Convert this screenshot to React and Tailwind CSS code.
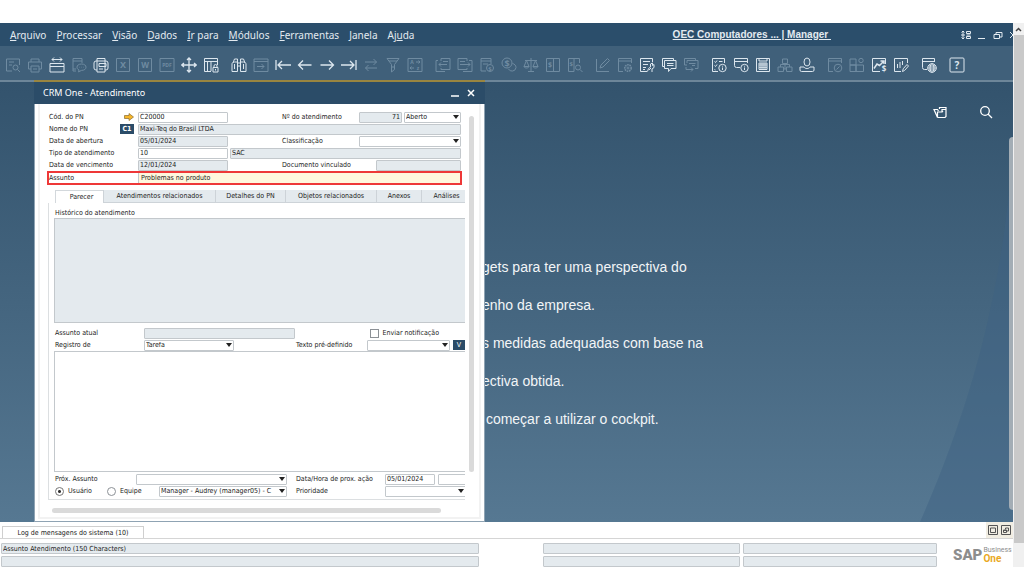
import React from 'react';
import clsx from 'clsx';

const FORM_FONT = "font-['DejaVu_Sans_Condensed','DejaVu_Sans',sans-serif]";

const MENUS = [
  ['', 'A', 'rquivo'],
  ['', 'P', 'rocessar'],
  ['', 'V', 'isão'],
  ['', 'D', 'ados'],
  ['', 'I', 'r para'],
  ['', 'M', 'ódulos'],
  ['', 'F', 'erramentas'],
  ['', 'J', 'anela'],
  ['Aj', 'u', 'da'],
];

const letter = (char, size = 9, x = 8, y = 11) => (
  <text x={x} y={y} fontSize={size} fontWeight="700" textAnchor="middle" fill="currentColor" stroke="none">
    {char}
  </text>
);

const coin = (cx, cy, r = 3) => (
  <>
    <circle cx={cx} cy={cy} r={r} />
    {letter('$', r * 2 - 1, cx, cy + r - 1)}
  </>
);

const info = (
  <>
    <circle cx="11.5" cy="11" r="3.7" />
    <path d="M11.5 10.5v2.5M11.5 8.8v.8" />
  </>
);

// Toolbar groups: [label, enabled, drawing]
const TOOLBAR = [
  [
    ['Visualizar', false, <><path d="M7 14H1.5V2h13v6M4 5h5M4 8h3" /><circle cx="10.5" cy="10.5" r="2.5" /><path d="m12.5 12.5 2.5 2.5" /></>],
    ['Imprimir', false, <><path d="M4 5V2h8v3M4 12H1.5V5h13v7H12" /><path d="M4 9h8v6H4zM6 12h4" /></>],
    ['Enviar', true, <><path d="M1 6.500h14v8.500H1zM1 9.500h14" /><path d="M3 2.500h10M5 .5 3 2.500l2 2M11 .5l2 2-2 2" /></>],
    ['Enviar SMS', false, <><path d="M5 14H2V1.500h9V6M2 4h9M2 12h3" /><path d="M10.500 7c3 0 4.500 1.500 4.500 3.200s-1.500 3.200-4.500 3.200l-3 1.500.5-2C6.500 12.300 6 11.300 6 10.200 6 8.500 7.500 7 10.500 7zM8.500 10.200h.5M10.300 10.200h.5M12 10.200h.5" /></>],
    ['Fax', true, <><path d="M4 4H3a2 2 0 0 0-2 2v5a2 2 0 0 0 2 2h1M12 4h1a2 2 0 0 1 2 2v5a2 2 0 0 1-2 2h-1M4 1.500h8V15H4zM4 4h8" /><path d="M6 6.500h7v3H6zM6 12h4" /></>],
    ['Exportar para Excel', false, <><path d="M1.500 1.500h13v13h-13z" />{letter('X')}</>],
    ['Exportar para Word', false, <><path d="M1.500 1.500h13v13h-13z" />{letter('W', 8)}</>],
    ['Exportar para PDF', false, <><path d="M1 1.500h14v13H1z" />{letter('PDF', 5, 8, 10)}</>],
    ['Mover', true, <><path strokeWidth="1.300" d="M8 1v14M.8 8h14.400M6 3l2-2 2 2M6 13l2 2 2-2M3 6 .8 8 3 10M13 6l2.200 2L13 10" /></>],
    ['Bloquear tela', true, <><path d="M8 14.500H1.500v-13h13V8M1.500 4.500h13M4.500 4.500v10M8 4.500V14" /><path d="M10 10.500h5V15h-5zM11 10.500V9a1.500 1.500 0 0 1 3 0v1.500M12.500 12v1.500" /></>],
  ],
  [
    ['Procurar', true, <><path d="M2 6 3.500 2h3v3M14 6l-1.500-4h-3v3M1 7c0-1 1-2 2.500-2H6.500v9.500H1zM15 7c0-1-1-2-2.500-2H9.500v9.500H15zM6.500 6h3M6.500 9h3M3.500 7v5M12.500 7v5" /></>],
    ['Incluir', false, <><path d="M1 2h14v12.500H1zM1 4.500h14M4 9.500h7M8.500 7l2.500 2.500L8.500 12" /></>],
    ['Primeiro registro', true, <path strokeWidth="1.300" d="M1 3v10M3 8h13M7 4 3 8l4 4" />],
    ['Registro anterior', true, <path strokeWidth="1.300" d="M1.500 8h13M6 3.500 1.500 8 6 12.500" />],
    ['Próximo registro', true, <path strokeWidth="1.300" d="M1.500 8h13M10 3.500 14.500 8 10 12.500" />],
    ['Último registro', true, <path strokeWidth="1.300" d="M15 3v10M0 8h13M9 4l4 4-4 4" />],
    ['Atualizar', false, <path d="M2 5h11.500M10.500 2l3 3-3 3M14 11H2.500M5.500 8l-3 3 3 3" />],
    ['Filtro', false, <path d="M2 1.500h12l-4.500 6v5L6.500 15V7.500zM4 4h8M6.500 10h3" />],
    ['Ordenar', false, <><path d="M1 1.500h14v13H1zM9 5h4M11.500 3.500 13 5l-1.500 1.500M7 11H3M4.500 9.500 3 11l1.500 1.500" />{letter('A', 5, 5, 7)}{letter('z', 5, 11, 13)}</>],
  ],
  [
    ['Documento base', false, <path d="M6 4V1.500h9v11H6V11M3 3.500H1v11h9M8 4.500h5M12 7.500H4M6 5.500l-2 2 2 2" />],
    ['Documento destino', false, <path d="M10 4V1.500H1v11h9V11M12 3.500h3v11H6M3 4.500h5M3 7.500h10M11 5.500l2 2-2 2" />],
    ['Lucro bruto', false, <><path d="M7 14H2V1.500h10V7M2 4h10M4 7h5" />{coin(11, 11, 3.5)}</>],
    ['Meios de pagamento', false, <>{coin(6, 6, 5)}<path d="M11.500 6.500c2 .5 3.500 2 3.500 4A4 4 0 0 1 7.500 12" /></>],
    ['Volume e peso', false, <path d="M8 1v13.500M5 14.500h6M2 3.500h12M3.500 3.500 1 9.500h5zM12.500 3.500 10 9.500h5zM1 9.500c.5 2 4.500 2 5 0M10 9.500c.5 2 4.500 2 5 0" />],
    ['Diário', false, <><path d="M1.500 1.500h13v13h-13zM8.500 1.500v13" />{letter('$', 7, 5, 10)}</>],
    ['Pesquisa de conta', false, <><path d="M7 14.500H1.500v-13h11V6M7 1.500v13" />{letter('$', 6, 4.300, 9)}<circle cx="11" cy="10.500" r="2.500" /><path d="m13 12.500 2.500 2.500" /></>],
  ],
  [
    ['Editar modelo', false, <path d="M1.500 2v12.500H14M5 11l1-3 6.500-6.500 2 2L8 10z" />],
    ['Configurações', false, <><path d="M6 14.500H1.500v-13h13V6M1.500 4h13" /><circle cx="11" cy="11" r="3.200" strokeDasharray="1.600 .7" strokeWidth="1.600" /><circle cx="11" cy="11" r="1" /></>],
    ['Personalizar formulário', true, <path d="M8 14.500H1.500v-13h12V5M4 4.500h7M4 7.500h5M4 10.500h3M4 12.500h2M8.500 14.500l1-3 2-1.500v-3l2-1v2.500l1.500-1v3L13 12v3M10 13l2-2" />],
    ['Mensagens', true, <path d="M3.500 9.500H1.500V1.500h11v2M3.500 3.500h11.500v8H10l-2.500 3v-3h-4zM6 6.500h6.500M6 8.500h6.500" />],
    ['Responder', false, <path d="M4 8H1.500V1.500h11v2M4 6V3.500h11v8h-3M6 6.500h6.500M12 8.500H9M3 12.500h7M8 10.500l2 2-2 2M3 10v2.500" />],
  ],
  [
    ['Lista de alertas', true, <><path d="M7 14.500H1.500v-13h12V6M3.500 4.500l1 1 1.500-2M3.500 8.500l1 1 1.500-2M8 4.500h3.500M3.500 12.500l1 .500" />{info}</>],
    ['Resumo', true, <><path d="M7 10.500H3.500a2 2 0 0 1-2-2v-7h13V6M1.500 4.500h13" />{info}</>],
    ['Calendário', true, <path d="M1.500 1.500h13v13h-13zM4 4h8M4 6h8v6.500H4zM6 6v6.500M8 6v6.500M10 6v6.500M4 8h8M4 10.300h8M4 1v3M12 1v3" />],
    ['Estrutura', false, <path d="M5.500 2h5v4.500h-5zM1 10h5.500v4.500H1zM9.500 10H15v4.500H9.500zM8 6.500V12M3.500 10V7.500h9V10M6.500 12h3" />],
    ['Usuário', true, <><ellipse cx="8" cy="5" rx="3" ry="4" /><path d="M1 10h4c1 2 5 2 6 0h4v3q0 1.500-1.500 1.500h-11Q1 14.500 1 13z" /></>],
  ],
  [
    ['Histórico', false, <><path d="M6 14.500H1.500v-13h13V6M1.500 4h13" /><circle cx="11" cy="11" r="3.800" /><path d="m9.500 12.500 3-3" /></>],
    ['Widgets', false, <><path d="M1 2h6v6H1zM1 8h6v6.500H1zM7 8h7.500v6.500H7z" /><circle cx="12" cy="3.500" r="2.200" /></>],
    ['Painel financeiro', true, <><path d="M9 14.500H1.500v-13h13V7" /><path strokeWidth="1.500" d="M3 11.500 6 7l2.500 1.500 4-4M9.500 4H13v3" />{letter('$', 8, 13, 15)}</>],
    ['Painel de relatórios', true, <path d="M8 14.500H1.500v-13h13V6M4.500 7v4M7 5v6M9.500 4v4M9.500 14.500l.7-2.700L14 7.500l1.500 1.500-4 4.500z" />],
  ],
  [
    ['Navegador', true, <><path d="M6 12.500H3.500a2 2 0 0 1-2-2v-9h12V5M1.500 4.500h12" /><circle cx="11" cy="11" r="4.300" /><ellipse cx="11" cy="11" rx="2" ry="4.300" /><path d="M6.700 11h8.600M7.500 9h7M7.500 13h7" /></>],
  ],
  [['Ajuda', true, <><rect x="1" y="1" width="14" height="14" rx="1" />{letter('?', 10, 8, 11.5)}</>]],
];

function Toolbar() {
  return (
    <div className="flex h-[34px] items-center gap-3 overflow-hidden bg-[#40607a] pl-[5px] pt-[3px]">
      {TOOLBAR.map((group, i) => (
        <div key={i} className="flex shrink-0 gap-1.5">
          {group.map(([label, enabled, drawing]) => (
            <button
              key={label}
              aria-label={label}
              className={clsx('size-4', enabled ? 'text-[#dce6ee]' : 'text-[#6f8ba1]')}
            >
              <svg viewBox="0 0 16 16" className="size-4" fill="none" stroke="currentColor" strokeWidth="1">
                {drawing}
              </svg>
            </button>
          ))}
        </div>
      ))}
    </div>
  );
}

function MenuBar() {
  return (
    <header className="flex h-[23px] items-center bg-[#2b4e6b] text-[#e3eaf0]">
      <nav className="flex flex-1 gap-2.5 pl-2.5 font-['Noto_Sans',sans-serif] text-[10px] leading-4">
        {MENUS.map(([before, key, after]) => (
          <button key={key + after} className="whitespace-nowrap">
            {before}
            <span className="underline">{key}</span>
            {after}
          </button>
        ))}
      </nav>
      <a
        href="#empresa"
        className="mr-[130px] whitespace-pre font-['Liberation_Sans',sans-serif] text-[10px] font-bold leading-4 underline"
      >
        {'OEC Computadores ... | Manager '}
      </a>
      <div className="flex gap-1.5">
        <button aria-label="Layout">
          <svg viewBox="0 0 10 10" className="size-2.5" fill="none" stroke="currentColor">
            <path d="M2 1v8M.5 2.500 2 1l1.500 1.500M.5 7.500 2 9l1.500-1.500M0 5h4M5.500 1.500h4v2h-4zM5.500 6.500h4v2h-4zM5.500 5h4" />
          </svg>
        </button>
        <button aria-label="Minimizar">
          <svg viewBox="0 0 10 10" className="size-2.5" stroke="currentColor"><path d="M1 8.500h7" /></svg>
        </button>
        <button aria-label="Restaurar">
          <svg viewBox="0 0 10 10" className="size-2.5" fill="none" stroke="currentColor">
            <path d="M1 4.500h5.500v4H1zM3 4.500v-2h6v4.500H6.500" />
          </svg>
        </button>
        <button aria-label="Fechar" className="w-1 overflow-hidden">
          <svg viewBox="0 0 10 10" className="size-2.5" stroke="currentColor"><path d="m1 2 6 6M7 2 1 8" /></svg>
        </button>
      </div>
    </header>
  );
}

function Field({ className, value = '', readOnly, ...rest }) {
  return (
    <input
      type="text"
      defaultValue={value}
      readOnly={readOnly}
      className={clsx(
        'h-[11px] min-w-0 shrink-0 rounded-[1px] border border-[#c3c8cc] px-px leading-none outline-none',
        readOnly ? 'bg-[#e4eaee]' : 'bg-white',
        className
      )}
      {...rest}
    />
  );
}

function Select({ className, value = '', ...rest }) {
  return (
    <div className={clsx('grid h-[11px] shrink-0 items-center', className)}>
      <select
        defaultValue={value}
        className="col-start-1 row-start-1 h-[11px] w-full appearance-none rounded-[1px] border border-[#c3c8cc] bg-white px-px leading-none outline-none"
        {...rest}
      >
        <option value={value}>{value}</option>
      </select>
      <svg viewBox="0 0 6 4" className="pointer-events-none col-start-1 row-start-1 mr-0.5 h-1 w-1.5 justify-self-end">
        <path d="M0 0h6L3 4z" fill="#222" />
      </svg>
    </div>
  );
}

function Label({ className, ...rest }) {
  return <label className={clsx('shrink-0 whitespace-nowrap leading-3', className)} {...rest} />;
}

function Header() {
  return (
    <div className="w-[414px] pl-0.5">
      <div className="flex h-3 items-center">
        <Label htmlFor="cod" className="w-[75px]">Cód. do PN</Label>
        <button aria-label="Abrir cadastro" className="mr-1">
          <svg viewBox="0 0 10 8" className="h-2 w-2.5">
            <path d="M.5 2.500h4.500V.5L9.500 4 5 7.500v-2H.5z" fill="#f5b62c" stroke="#8a6a2a" strokeWidth=".7" />
          </svg>
        </button>
        <Field id="cod" value="C20000" className="w-[90px]" />
        <Label htmlFor="num" className="ml-auto w-[77px]">Nº do atendimento</Label>
        <Field id="num" value="71" readOnly className="mr-0.5 w-[43px] text-right" />
        <Select aria-label="Status" value="Aberto" className="w-[57px]" />
      </div>
      <div className="flex h-3 items-center">
        <Label htmlFor="nome" className="w-[71px]">Nome do PN</Label>
        <button className="mr-1 h-2.5 w-3.5 bg-[#2b4c68] font-bold leading-[10px] text-white">C1</button>
        <Field id="nome" value="Maxi-Teq do Brasil LTDA" readOnly className="flex-1" />
      </div>
      <div className="flex h-3 items-center">
        <Label htmlFor="abertura" className="w-[89px]">Data de abertura</Label>
        <Field id="abertura" value="05/01/2024" readOnly className="w-[90px]" />
        <Label htmlFor="classe" className="ml-auto w-[77px]">Classificação</Label>
        <Select id="classe" className="w-[102px]" />
      </div>
      <div className="flex h-3 items-center">
        <Label htmlFor="tipo" className="w-[89px]">Tipo de atendimento</Label>
        <Field id="tipo" value="10" className="mr-0.5 w-[90px]" />
        <Field aria-label="Descrição do tipo" value="SAC" readOnly className="flex-1" />
      </div>
      <div className="flex h-3 items-center">
        <Label htmlFor="venc" className="w-[89px]">Data de vencimento</Label>
        <Field id="venc" value="12/01/2024" readOnly className="w-[90px]" />
        <Label htmlFor="doc" className="ml-auto w-[94px]">Documento vinculado</Label>
        <Field id="doc" readOnly className="w-[85px]" />
      </div>
    </div>
  );
}

const TABS = ['Parecer', 'Atendimentos relacionados', 'Detalhes do PN', 'Objetos relacionados', 'Anexos', 'Análises'];
const TAB_WIDTHS = ['w-[48px]', 'w-[112px]', 'w-[70px]', 'w-[91px]', 'w-[45px]', 'w-[50px]'];

function TicketPanel() {
  return (
    <div className="ml-px overflow-hidden border-b border-l border-[#dcdfe1] pb-0.5 pl-[5px] pt-1">
      <Label htmlFor="historico" className="block h-[11px] pl-px">Histórico do atendimento</Label>
      <textarea
        id="historico"
        readOnly
        className="block h-[105px] w-full resize-none border border-r-0 border-[#c3c8cc] bg-[#e4eaee] outline-none"
      />
      <div className="mt-1 flex h-3 items-center pl-px">
        <Label htmlFor="atual" className="w-[89px]">Assunto atual</Label>
        <Field id="atual" readOnly className="w-[151px]" />
        <input
          id="notificar"
          type="checkbox"
          className="ml-auto mr-1 size-[9px] appearance-none border border-[#8c9196] bg-white"
        />
        <Label htmlFor="notificar" className="mr-[26px]">Enviar notificação</Label>
      </div>
      <div className="flex h-3 items-center pl-px">
        <Label htmlFor="registro" className="w-[89px]">Registro de</Label>
        <Select id="registro" value="Tarefa" className="w-[90px]" />
        <Label htmlFor="texto" className="ml-auto w-[71px]">Texto pré-definido</Label>
        <Select id="texto" className="w-[83px]" />
        <button className="ml-[3px] h-2.5 w-3 bg-[#2b4c68] leading-[10px] text-white">V</button>
      </div>
      <textarea
        aria-label="Parecer"
        className="block h-[121px] w-full resize-none border border-r-0 border-[#c3c8cc] bg-white outline-none"
      />
      <div className="mt-px flex h-3 items-center pl-px">
        <Label htmlFor="prox" className="w-[81px]">Próx. Assunto</Label>
        <Select id="prox" className="w-[151px]" />
        <Label htmlFor="data" className="ml-[9px] w-[89px]">Data/Hora de prox. ação</Label>
        <Field id="data" value="05/01/2024" className="mr-[3px] w-[50px]" />
        <Field aria-label="Hora" className="w-8" />
      </div>
      <div className="flex h-3 items-center pl-px">
        <Label className="flex w-[52px] items-center gap-1">
          <input
            type="radio"
            name="destino"
            defaultChecked
            className="size-[9px] appearance-none rounded-full border border-[#777] bg-white bg-[radial-gradient(circle,#333_1px,transparent_2px)]"
          />
          Usuário
        </Label>
        <Label className="flex w-[52px] items-center gap-1">
          <input type="radio" name="destino" className="size-[9px] appearance-none rounded-full border border-[#8c9196] bg-white" />
          Equipe
        </Label>
        <Select aria-label="Responsável" value="Manager - Audrey (manager05) - C" className="w-32" />
        <Label htmlFor="prioridade" className="ml-[9px] w-[89px]">Prioridade</Label>
        <Select id="prioridade" className="w-[81px]" />
      </div>
    </div>
  );
}

function TicketWindow() {
  return (
    <section className="z-10 col-start-1 row-start-1 ml-[34px] flex w-[451px] flex-col self-start border-t-2 border-[#998540]">
      <div className="flex h-[22px] items-center justify-between bg-[#2b4c68] pl-[9px] pr-2.5 text-white">
        <h1 className="font-['Noto_Sans',sans-serif] text-[9px] leading-4">CRM One - Atendimento</h1>
        <div className="flex gap-2">
          <button aria-label="Minimizar janela">
            <svg viewBox="0 0 8 8" className="size-2" stroke="currentColor" strokeWidth="1.500"><path d="M0 7h8" /></svg>
          </button>
          <button aria-label="Fechar janela">
            <svg viewBox="0 0 8 8" className="size-2" stroke="currentColor" strokeWidth="1.500"><path d="m1 1 6 6M7 1 1 7" /></svg>
          </button>
        </div>
      </div>
      <div className={clsx('border-x border-b border-[#8fa3b3] bg-white px-[3px] pb-0.5 text-[7px] text-[#222]', FORM_FONT)}>
        <div className="border-x-2 border-b-2 border-[#f2f2f2] pb-1 pl-[7px] pt-[7px]">
          <div className="flex gap-1">
            <form className="w-[418px] overflow-hidden">
              <Header />
              <div className="flex h-3.5 w-[415px] items-center border-2 border-[#ee3838]">
                <Label htmlFor="assunto" className="w-[89px]">Assunto</Label>
                <input
                  id="assunto"
                  type="text"
                  defaultValue="Problemas no produto"
                  className="h-2.5 min-w-0 flex-1 border-l border-[#c3c8cc] bg-[#fff7dd] pl-0.5 leading-none outline-none"
                />
              </div>
              <div role="tablist" className="ml-2 mt-[5px] flex h-[13px] bg-[#e4eaee]">
                {TABS.map((tab, i) => (
                  <button
                    key={tab}
                    type="button"
                    role="tab"
                    aria-selected={i === 0}
                    className={clsx(
                      'shrink-0 whitespace-nowrap leading-3',
                      TAB_WIDTHS[i],
                      i === 0 ? 'border-l border-t border-[#d3d8dc] bg-white pl-1' : 'border-b border-l border-[#cdd3d8]'
                    )}
                  >
                    {tab}
                  </button>
                ))}
              </div>
              <TicketPanel />
            </form>
            <div className="mb-7 mt-[5px] w-[5px] rounded-full bg-[#dadada]" />
          </div>
          <div className="ml-[5px] mt-2 h-[5px] w-[389px] rounded-full bg-[#dadada]" />
        </div>
      </div>
    </section>
  );
}

function Cockpit() {
  return (
    <div className="col-start-1 row-start-1 grid border-t-2 border-[#6d8699] bg-linear-to-b from-[#33536d] via-[#44657f] to-[#567892]">
      <svg viewBox="0 0 100 440" preserveAspectRatio="none" className="col-start-1 row-start-1 h-full w-[100px] justify-self-end">
        <path d="M100 60C92 200 60 320 7 440H100z" fill="#3f6283" opacity=".45" />
      </svg>
      <div className="col-start-1 row-start-1 flex h-[60px] items-center justify-end gap-8 pr-5 text-white">
        <button aria-label="Abrir cockpit">
          <svg viewBox="0 0 14 14" className="size-3.5" fill="none" stroke="currentColor" strokeWidth="1.200">
            <path d="M4.500 12.500 1 4.500h3.500l1 1.500M4.500 12.500H12l1-1V2.500H6.500V4M4.500 12.500V7h4.500V4.500h4M9 7l1-1" />
          </svg>
        </button>
        <button aria-label="Pesquisar">
          <svg viewBox="0 0 14 14" className="size-3.5" fill="none" stroke="currentColor" strokeWidth="1.300">
            <circle cx="6" cy="6" r="4.300" />
            <path d="m9 9 4 4" />
          </svg>
        </button>
      </div>
      <div className="col-start-1 row-start-1 whitespace-pre pl-[482px] pt-[166px] font-['Liberation_Sans',sans-serif] text-[14px] leading-[38px] text-[#f2f5f7]">
        <p>gets para ter uma perspectiva do</p>
        <p>enho da empresa.</p>
        <p>s medidas adequadas com base na</p>
        <p>ectiva obtida.</p>
        <p>{' começar a utilizar o cockpit.'}</p>
      </div>
      <div className="col-start-1 row-start-1 mb-3 mt-[55px] w-1 justify-self-end rounded-l bg-[#a3adb5]" />
    </div>
  );
}

function StatusBar() {
  return (
    <footer className={clsx('h-[45px] bg-white text-[7px] text-[#222]', FORM_FONT)}>
      <div className="flex h-[17px] items-end justify-between border-b border-[#d5d5d5] pl-0.5">
        <button className="h-3 w-[142px] border border-b-0 border-[#cfcfcf] bg-white leading-3">
          Log de mensagens do sistema (10)
        </button>
        <div className="flex h-full items-center gap-[3px] bg-[#f1ede2] px-0.5 text-[#555]">
          <button aria-label="Maximizar log">
            <svg viewBox="0 0 10 10" className="size-2.5" fill="none" stroke="currentColor">
              <path d="M.5.5h9v9h-9zM2.500 3h5v4.500h-5z" />
            </svg>
          </button>
          <button aria-label="Restaurar log">
            <svg viewBox="0 0 10 10" className="size-2.5" fill="none" stroke="currentColor">
              <path d="M.5.5h9v9h-9zM2.500 5h3v2.500h-3zM4.500 4.500V3h3v3h-2M3 5.500h2" />
            </svg>
          </button>
        </div>
      </div>
      <div className="flex items-center pl-px pt-1">
        <div className="grid flex-1 grid-cols-[478fr_58fr_197fr_194fr] gap-x-[3px] gap-y-0.5">
          <Field aria-label="Mensagem" value="Assunto Atendimento (150 Characters)" readOnly />
          <Field aria-label="Status 1" readOnly className="col-start-3" />
          <Field aria-label="Status 2" readOnly />
          <Field aria-label="Mensagem 2" readOnly />
          <Field aria-label="Status 3" readOnly className="col-start-3" />
          <Field aria-label="Status 4" readOnly />
        </div>
        <div className="ml-4 flex w-[60px] items-center font-['Roboto',sans-serif] text-[#8d8d8d]">
          <span className="text-[15px] font-black leading-4">SAP</span>
          <span className="flex flex-col pl-px">
            <span className="text-[7px] leading-[7px]">Business</span>
            <span className="text-[10px] font-bold leading-[9px] text-[#e9a91f]">One</span>
          </span>
        </div>
      </div>
    </footer>
  );
}

export default function App() {
  return (
    <div className="flex min-h-screen flex-col bg-white pb-[9px] pt-[23px]">
      <div className="flex flex-1">
        <div className="flex min-w-0 flex-1 flex-col">
          <MenuBar />
          <Toolbar />
          <main className="grid flex-1">
            <Cockpit />
            <TicketWindow />
          </main>
          <StatusBar />
        </div>
        <div className="flex w-[11px] flex-col bg-[#f0f0f0] pb-6">
          <svg viewBox="0 0 11 12" className="h-3 w-[11px]" fill="none" stroke="#444" strokeWidth="1.500">
            <path d="M3 8l2.500-2.500L8 8" />
          </svg>
          <div className="ml-px flex-1 bg-[#c9c9c9]" />
        </div>
      </div>
    </div>
  );
}
